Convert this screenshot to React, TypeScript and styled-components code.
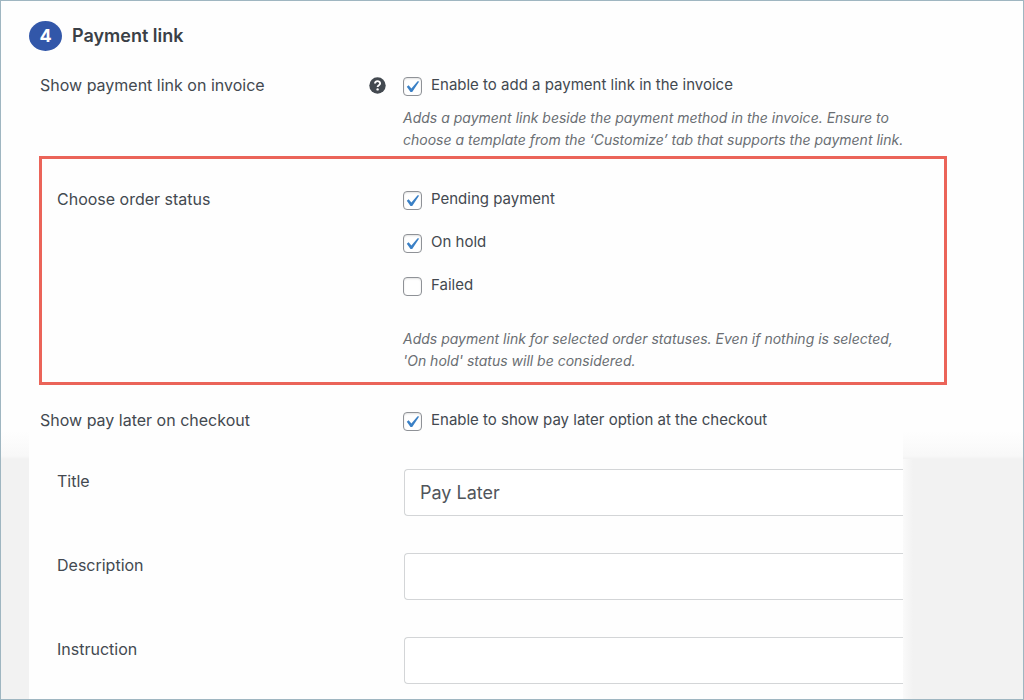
import React, { useId } from "react";
import styled, { createGlobalStyle } from "styled-components";

const GlobalStyle = createGlobalStyle`
  *, *::before, *::after { box-sizing: border-box; }
  body {
    margin: 0;
    background: #fefefe;
    color: #434950;
    font-family: Inter, "Liberation Sans", sans-serif;
    font-size: 16px;
    line-height: 22px;
  }
`;

const Frame = styled.main`
  display: flex;
  flex-direction: column;
  min-height: 100vh;
  border: 1px solid #9fb6c1;
`;

const Upper = styled.section`
  padding: 20px 76px 0 28px;
`;

const Header = styled.header`
  display: flex;
  align-items: center;
  gap: 10px;
  height: 30px;
  margin-bottom: 23px;
`;

const StepBadge = styled.span`
  display: grid;
  place-items: center;
  width: 33px;
  height: 30px;
  border-radius: 50%;
  background: #3257a9;
  color: #fff;
  font-size: 18px;
  font-weight: 700;
`;

const Heading = styled.h2`
  margin: 0;
  color: #3a4046;
  font-size: 18px;
  font-weight: 600;
`;

const Row = styled.div<{ $inset?: boolean }>`
  display: grid;
  grid-template-columns: ${(p) => (p.$inset ? 347 : 363)}px minmax(0, 1fr);
  padding-left: ${(p) => (p.$inset ? 28 : 11)}px;
`;

const LabelCell = styled.div`
  display: flex;
  align-items: center;
  align-self: start;
  justify-content: space-between;
  padding-right: 17px;
`;

const FieldLabel = styled.label`
  padding-top: 1px;
`;

const HelpButton = styled.button`
  display: grid;
  width: 17px;
  height: 17px;
  padding: 0;
  border: 0;
  background: none;
  color: #434950;
  cursor: pointer;
`;

const Highlight = styled.div`
  display: grid;
  grid-template-columns: 346px minmax(0, 1fr);
  margin: 5px 0 24px 10px;
  padding: 29px 15px 10px;
  border: 3px solid #eb6459;
`;

const Choices = styled.div`
  display: grid;
  gap: 21px;
`;

const CheckLabel = styled.label`
  display: flex;
  align-items: center;
  gap: 9px;
  font-size: 15px;
`;

const CheckWrap = styled.span`
  display: grid;
  width: 19px;
  height: 19px;
  margin-top: 2px;

  > * {
    grid-area: 1 / 1;
  }
`;

const CheckInput = styled.input`
  appearance: none;
  width: 19px;
  height: 19px;
  margin: 0;
  border: 1px solid #8f9297;
  border-radius: 4px;
  background: #fff;
  box-shadow: inset 0 1px 2px rgba(0, 0, 0, 0.12);

  & + svg {
    visibility: hidden;
    pointer-events: none;
  }

  &:checked + svg {
    visibility: visible;
  }
`;

const Hint = styled.p<{ $gap: number }>`
  margin: ${(p) => p.$gap}px 0 0;
  color: #6a6e73;
  font-size: 14px;
  font-style: italic;
`;

const Lower = styled.section`
  flex: 1;
  display: flex;
  padding: 0 120px 0 28px;
  background: linear-gradient(#fefefe, #f8f8f8 25px, #f2f2f2 28px);
`;

const Sheet = styled.div`
  flex: 1;
  display: flex;
  flex-direction: column;
  gap: 37px;
  min-width: 0;
  padding: 38px 0 13px;
  background: #fefefe;
`;

const Fade = styled.div`
  width: 10px;
  margin: 28px -10px 0 0;
  background: linear-gradient(to right, #fafafa, #f2f2f2);
`;

const TextInput = styled.input`
  width: 100%;
  height: 47px;
  padding: 0 15px;
  border: 1px solid #d3d5d7;
  border-right: 0;
  border-radius: 4px 0 0 4px;
  background: #fff;
  color: #50555b;
  font: inherit;
  font-size: 18px;
`;

function Check({ text, checked = false }: { text: string; checked?: boolean }) {
  return (
    <CheckLabel>
      <CheckWrap>
        <CheckInput type="checkbox" defaultChecked={checked} />
        <svg width="19" height="19" viewBox="0 0 19 19" aria-hidden="true">
          <path
            d="M3.8 9.7 L5.6 8.3 L8.4 11.4 L14.6 4.2 L16.2 4.6 L9.2 14.9 L7.5 14.9 Z"
            fill="#3a80c6"
          />
        </svg>
      </CheckWrap>
      {text}
    </CheckLabel>
  );
}

function Field({ label, value = "" }: { label: string; value?: string }) {
  const id = useId();
  return (
    <Row $inset>
      <LabelCell>
        <FieldLabel htmlFor={id}>{label}</FieldLabel>
      </LabelCell>
      <TextInput id={id} type="text" defaultValue={value} />
    </Row>
  );
}

export default function App() {
  return (
    <>
      <GlobalStyle />
      <Frame>
        <Upper>
          <Header>
            <StepBadge>4</StepBadge>
            <Heading>Payment link</Heading>
          </Header>
          <Row>
            <LabelCell>
              <span>Show payment link on invoice</span>
              <HelpButton type="button" aria-label="Help">
                <svg width="17" height="17" viewBox="0 0 17 17" aria-hidden="true">
                  <circle cx="8.5" cy="8.5" r="8.2" fill="currentColor" />
                  <path
                    d="M6 6.6 C6 3.4 11.1 3.4 11.1 6.4 C11.1 8.3 8.6 8.1 8.6 10.1"
                    fill="none"
                    stroke="#fff"
                    strokeWidth="1.9"
                  />
                  <circle cx="8.6" cy="12.4" r="1.2" fill="#fff" />
                </svg>
              </HelpButton>
            </LabelCell>
            <div>
              <Check text="Enable to add a payment link in the invoice" checked />
              <Hint $gap={11}>
                Adds a payment link beside the payment method in the invoice. Ensure to
                <br />
                choose a template from the ‘Customize’ tab that supports the payment link.
              </Hint>
            </div>
          </Row>
          <Highlight>
            <LabelCell>Choose order status</LabelCell>
            <div>
              <Choices role="group" aria-label="Choose order status">
                <Check text="Pending payment" checked />
                <Check text="On hold" checked />
                <Check text="Failed" />
              </Choices>
              <Hint $gap={32}>
                Adds payment link for selected order statuses. Even if nothing is selected,
                <br />
                'On hold' status will be considered.
              </Hint>
            </div>
          </Highlight>
          <Row>
            <LabelCell>Show pay later on checkout</LabelCell>
            <Check text="Enable to show pay later option at the checkout" checked />
          </Row>
        </Upper>
        <Lower>
          <Sheet>
            <Field label="Title" value="Pay Later" />
            <Field label="Description" />
            <Field label="Instruction" />
          </Sheet>
          <Fade />
        </Lower>
      </Frame>
    </>
  );
}
